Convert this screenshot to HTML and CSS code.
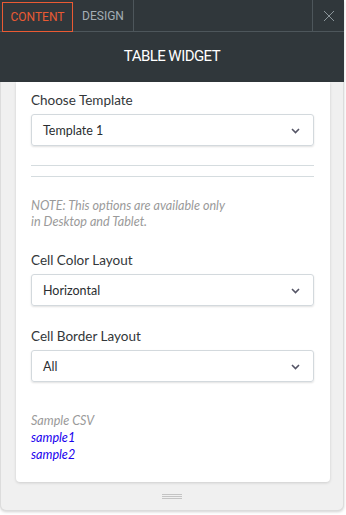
FILE: index.html
```html
<!DOCTYPE html>
<html>
<head>
<meta charset="utf-8">
<link rel="stylesheet" href="styles.css">
</head>
<body>
<div class="panel">
  <div class="header">
    <div class="tabs">
      <div class="tab active">CONTENT</div>
      <div class="tab">DESIGN</div>
      <div class="spacer"></div>
      <div class="close">
        <svg width="12" height="12" viewBox="0 0 12 12"><path d="M1 1 L11 11 M11 1 L1 11" stroke="#8b959a" stroke-width="1" fill="none"/></svg>
      </div>
    </div>
    <div class="title">TABLE WIDGET</div>
  </div>
  <div class="card">
    <div class="label">Choose Template</div>
    <div class="select"><span>Template 1</span><svg class="chev" width="9" height="6" viewBox="0 0 9 6"><path d="M1 1 L4.5 4.5 L8 1" stroke="#556" stroke-width="1.6" fill="none"/></svg></div>
    <div class="rule first"></div>
    <div class="rule"></div>
    <div class="note">NOTE: This options are available only<br>in Desktop and Tablet.</div>
    <div class="label">Cell Color Layout</div>
    <div class="select"><span>Horizontal</span><svg class="chev" width="9" height="6" viewBox="0 0 9 6"><path d="M1 1 L4.5 4.5 L8 1" stroke="#556" stroke-width="1.6" fill="none"/></svg></div>
    <div class="label second">Cell Border Layout</div>
    <div class="select"><span>All</span><svg class="chev" width="9" height="6" viewBox="0 0 9 6"><path d="M1 1 L4.5 4.5 L8 1" stroke="#556" stroke-width="1.6" fill="none"/></svg></div>
    <div class="csv">
      <div class="csv-title">Sample CSV</div>
      <a class="link" href="#">sample1</a>
      <a class="link" href="#">sample2</a>
    </div>
  </div>
  <div class="handle"><span></span><span></span><span></span></div>
</div>
</body>
</html>
```

FILE: styles.css
```css
html, body {
  margin: 0;
  padding: 0;
  background: #ffffff;
}
body {
  font-family: "Lato", "Liberation Sans", sans-serif;
  width: 346px;
  height: 515px;
  overflow: hidden;
}
.panel {
  width: 344px;
  height: 511px;
  box-sizing: border-box;
  background: #f0f0f0;
  border: 1px solid #dcdcdc;
  border-top: none;
  border-radius: 0 0 6px 6px;
  box-shadow: 0 1px 3px rgba(0,0,0,0.18);
  display: flex;
  flex-direction: column;
}
.header {
  background: #30373b;
  margin: 0 -1px;
}
.tabs {
  display: flex;
  height: 32px;
  border-bottom: 1px solid #4d565b;
  box-sizing: border-box;
}
.tab {
  display: flex;
  align-items: center;
  justify-content: center;
  font-family: "Roboto", "Liberation Sans", sans-serif;
  font-size: 12px;
  color: #a4aeb4;
  padding: 0 11px;
  border-right: 1px solid #4d565b;
}
.tab.active {
  color: #ea5a33;
  border: 1px solid #ea5a33;
  margin: 2px 0 0 2px;
  height: 30px;
  box-sizing: border-box;
  width: 71px;
  padding: 0;
}
.tab.active + .tab {
  width: 60px;
  padding: 0;
}
.spacer { flex: 1; }
.close {
  width: 31px;
  border-left: 1px solid #4d565b;
  display: flex;
  align-items: center;
  justify-content: center;
}
.title {
  height: 50px;
  display: flex;
  align-items: center;
  justify-content: center;
  color: #ffffff;
  font-family: "Roboto", "Liberation Sans", sans-serif;
  font-size: 15px;
  letter-spacing: -0.55px;
  padding-bottom: 2px;
  box-sizing: border-box;
}
.card {
  background: #ffffff;
  margin: 0 13px 0 15px;
  padding: 9px 16px 19px 15px;
  border-radius: 0 0 4px 4px;
  box-shadow: 0 1px 3px rgba(0,0,0,0.15);
  display: flex;
  flex-direction: column;
}
.label {
  font-size: 13.5px;
  color: #33373a;
  line-height: 18px;
  margin-bottom: 5px;
}
.label.second { margin-top: 21px; }
.select {
  height: 32px;
  box-sizing: border-box;
  border: 1px solid #d3d9dd;
  border-radius: 3px;
  box-shadow: 0 1px 2px rgba(0,0,0,0.12);
  display: flex;
  align-items: center;
  justify-content: space-between;
  padding: 0 13px 0 11px;
  font-size: 12.5px;
  color: #2a2e31;
}
.chev { margin-top: 1px; }
.rule {
  height: 1px;
  background: #d5dcdf;
  margin-top: 10px;
}
.rule.first { margin-top: 19px; }
.note {
  margin-top: 21px;
  font-size: 12.6px;
  font-style: italic;
  color: #9a9a9a;
  line-height: 16px;
  margin-bottom: 21px;
}
.csv {
  margin-top: 30px;
  display: flex;
  flex-direction: column;
  font-size: 12.6px;
  font-style: italic;
  line-height: 17px;
}
.csv-title { color: #9a9a9a; }
.link {
  color: #1a00ee;
  text-decoration: none;
}
.handle {
  flex: 1;
  display: flex;
  flex-direction: column;
  align-items: center;
  justify-content: center;
  gap: 1px;
  padding-top: 1px;
}
.handle span {
  display: block;
  width: 20px;
  height: 1px;
  background: #c4c4c4;
}
```
